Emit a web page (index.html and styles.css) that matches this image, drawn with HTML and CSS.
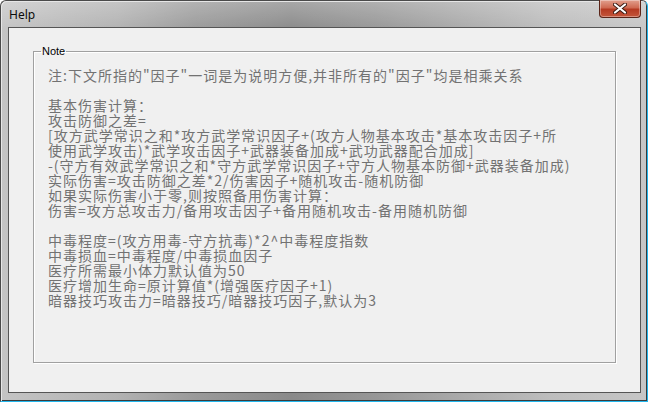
FILE: index.html
```html
<!DOCTYPE html>
<html lang="zh-CN">
  <head>
    <meta charset="UTF-8" />
    <meta name="viewport" content="width=device-width, initial-scale=1.0" />
    <title>Help</title>
    <link rel="stylesheet" href="styles.css">
  </head>
  <body>
    <div class="window">
      <div class="titlebar">
        <span class="title">Help</span>
        <button class="close" title="Close">
          <svg width="14" height="11" viewBox="0 0 14 11">
            <path d="M2 1.5 L12 9.5 M12 1.5 L2 9.5" stroke="#3a1a12" stroke-width="4" stroke-linecap="round" />
            <path d="M2 1.5 L12 9.5 M12 1.5 L2 9.5" stroke="#ffffff" stroke-width="2.2" stroke-linecap="round" />
          </svg>
        </button>
      </div>
      <div class="client">
        <fieldset class="group">
          <legend>Note</legend>
          <div class="note">注:下文所指的"因子"一词是为说明方便,并非所有的"因子"均是相乘关系

基本伤害计算：
攻击防御之差=
[攻方武学常识之和*攻方武学常识因子+(攻方人物基本攻击*基本攻击因子+所
使用武学攻击)*武学攻击因子+武器装备加成+武功武器配合加成]
-(守方有效武学常识之和*守方武学常识因子+守方人物基本防御+武器装备加成)
实际伤害=攻击防御之差*2/伤害因子+随机攻击-随机防御
如果实际伤害小于零,则按照备用伤害计算：
伤害=攻方总攻击力/备用攻击因子+备用随机攻击-备用随机防御

中毒程度=(攻方用毒-守方抗毒)*2^中毒程度指数
中毒损血=中毒程度/中毒损血因子
医疗所需最小体力默认值为50
医疗增加生命=原计算值*(增强医疗因子+1)
暗器技巧攻击力=暗器技巧/暗器技巧因子,默认为3</div>
        </fieldset>
      </div>
    </div>
  </body>
</html>
```

FILE: styles.css
```css
body {
  margin: 0;
  width: 648px;
  height: 402px;
  overflow: hidden;
  background: #ffffff;
}
.window {
  box-sizing: border-box;
  width: 648px;
  height: 402px;
  display: flex;
  flex-direction: column;
  padding: 0 6px 8px 7px;
  border-radius: 6px 6px 0 0;
  border: 1px solid #4a4a4a;
  border-right-color: #22b6ec;
  border-bottom-color: #22b6ec;
  background:
    linear-gradient(to bottom, rgba(255,255,255,0.25), rgba(255,255,255,0) 30px),
    linear-gradient(to right, #c4c4c4 0%, #b2b2b2 18%, #9a9a9a 30%, #8a8a8a 45%, #979797 58%, #a8a8a8 70%, #bdbdbd 85%, #c6c6c6 100%);
  box-shadow: inset 1px 1px 0 #e6e6e6, inset -1px -1px 0 #3a3a3a;
}
.titlebar {
  height: 26px;
  display: flex;
  align-items: flex-start;
}
.title {
  font-family: "Noto Sans", "Open Sans", sans-serif;
  font-size: 12px;
  color: #0c0c0c;
  margin-top: 5px;
  margin-left: 1px;
}
.close {
  margin-left: auto;
  margin-top: -1px;
  margin-right: 0;
  width: 42px;
  height: 18px;
  padding: 0;
  border: 1px solid #5a2418;
  border-top: none;
  border-radius: 0 0 4px 4px;
  background: linear-gradient(to bottom, #e2a08e 0%, #cf6a52 45%, #b53a22 55%, #c4553a 100%);
  box-shadow: inset 0 0 0 1px rgba(255,255,255,0.35);
  display: flex;
  align-items: center;
  justify-content: center;
}
.client {
  flex: 1;
  display: flex;
  flex-direction: column;
  background: #f0f0f0;
  border: 1px solid #555555;
  padding: 17px 24px 29px 24px;
}
.group {
  flex: 1;
  margin: 0;
  padding: 0;
  min-width: 0;
  border: 1px solid #a0a0a0;
  box-shadow: 1px 1px 0 #ffffff, inset 1px 1px 0 #ffffff;
}
.group legend {
  margin-left: 7px;
  padding: 0 1px;
  font-family: "Liberation Sans", Arial, sans-serif;
  font-size: 11px;
  line-height: 13px;
  color: #000000;
}
.note {
  padding: 10px 14px 0 14px;
  white-space: pre;
  font-family: "Noto Sans CJK SC", sans-serif;
  font-size: 14px;
  letter-spacing: 1px;
  line-height: 15px;
  color: #727272;
}
```
